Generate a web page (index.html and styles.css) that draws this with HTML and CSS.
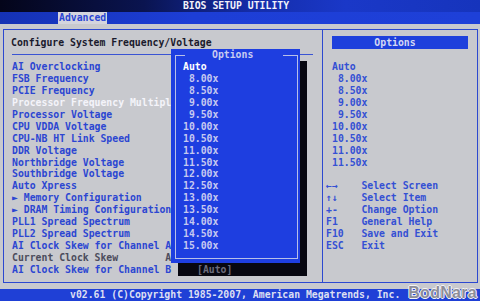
FILE: index.html
```html
<!DOCTYPE html>
<html>
<head>
<meta charset="utf-8">
<link rel="stylesheet" href="styles.css">
</head>
<body>
<div class="title">BIOS SETUP UTILITY</div>
<div class="tabs"><span class="tab">Advanced</span></div>
<div class="main">
  <div class="frame">
    <section class="left">
      <h1 class="heading">Configure System Frequency/Voltage</h1>
      <div class="sep"></div>
      <ul class="items">
        <li>AI Overclocking</li>
        <li>FSB Frequency</li>
        <li>PCIE Frequency</li>
        <li class="cur">Processor Frequency Multipl</li>
        <li>Processor Voltage</li>
        <li>CPU VDDA Voltage</li>
        <li>CPU-NB HT Link Speed</li>
        <li>DDR Voltage</li>
        <li>Northbridge Voltage</li>
        <li>Southbridge Voltage</li>
        <li>Auto Xpress</li>
        <li>► Memory Configuration</li>
        <li>► DRAM Timing Configuration</li>
        <li>PLL1 Spread Spectrum</li>
        <li>PLL2 Spread Spectrum</li>
        <li>AI Clock Skew for Channel A</li>
        <li class="dim">Current Clock Skew        A</li>
        <li>AI Clock Skew for Channel B</li>
      </ul>
    </section>
    <section class="right">
      <div class="opt-head">Options</div>
      <ul class="vals">
        <li>Auto</li>
        <li> 8.00x</li>
        <li> 8.50x</li>
        <li> 9.00x</li>
        <li> 9.50x</li>
        <li>10.00x</li>
        <li>10.50x</li>
        <li>11.00x</li>
        <li>11.50x</li>
      </ul>
      <ul class="help">
        <li><span class="k">←→</span>Select Screen</li>
        <li><span class="k">↑↓</span>Select Item</li>
        <li><span class="k">+-</span>Change Option</li>
        <li><span class="k">F1</span>General Help</li>
        <li><span class="k">F10</span>Save and Exit</li>
        <li><span class="k">ESC</span>Exit</li>
      </ul>
    </section>
  </div>
</div>
<div class="footer">v02.61 (C)Copyright 1985-2007, American Megatrends, Inc.</div>

<div class="shadow"><span>[Auto]</span></div>
<div class="popup">
  <fieldset class="pframe">
    <legend>Options</legend>
    <ul class="plist">
      <li class="sel">Auto</li>
      <li> 8.00x</li>
      <li> 8.50x</li>
      <li> 9.00x</li>
      <li> 9.50x</li>
      <li>10.00x</li>
      <li>10.50x</li>
      <li>11.00x</li>
      <li>11.50x</li>
      <li>12.00x</li>
      <li>12.50x</li>
      <li>13.00x</li>
      <li>13.50x</li>
      <li>14.00x</li>
      <li>14.50x</li>
      <li>15.00x</li>
    </ul>
  </fieldset>
</div>
<div class="watermark">BodNara</div>
</body>
</html>
```
FILE: styles.css
```css
html, body {
  margin: 0;
  padding: 0;
}
body {
  width: 480px;
  height: 301px;
  overflow: hidden;
  position: relative;
  background: #c8c9ce;
  font-family: "DejaVu Sans Mono", "Liberation Mono", monospace;
  font-weight: bold;
  font-size: 9.8px;
  line-height: 11.94px;
}
ul {
  list-style: none;
  margin: 0;
  padding: 0;
}
li {
  white-space: pre;
}

.title {
  height: 12px;
  line-height: 12px;
  text-align: center;
  padding-right: 8px;
  color: #f2f2fa;
  background: linear-gradient(90deg, #04051a 0%, #0a1450 30%, #142ca8 52%, #1a38c8 72%, #1634bc 100%);
}
.tabs {
  height: 12px;
  padding-left: 58px;
  background: linear-gradient(90deg, #1532b4 0%, #1d3ed6 40%, #1e40d8 100%);
}
.tab {
  display: inline-block;
  height: 12px;
  line-height: 12px;
  padding: 0 1px;
  background: #d4d5de;
  color: #2a46d4;
}

.main {
  height: 265px;
  box-sizing: border-box;
  padding: 5px 2px 0 3px;
}
.frame {
  height: 254px;
  box-sizing: border-box;
  border: 1px solid #2c48d0;
  display: grid;
  grid-template-columns: 319px 1fr;
}

.left {
  border-right: 1px solid #2c48d0;
  padding: 7px 0 0 7px;
}
.heading {
  margin: 0;
  font: inherit;
  line-height: 12px;
  color: #1a1a2c;
}
.sep {
  margin: 5px 0 0 1px;
  width: 301px;
  height: 1px;
  background: #3a54d4;
}
.items {
  margin: 6px 0 0 1px;
  color: #2c46d2;
}
.items .cur {
  color: #f4f4fa;
}
.items .dim {
  color: #4c4c5c;
}

.right {
  padding-top: 6px;
}
.opt-head {
  margin-left: 9px;
  width: 136px;
  height: 13px;
  line-height: 13px;
  box-sizing: border-box;
  padding-right: 10px;
  text-align: center;
  background: #1e40dc;
  color: #d4d8f4;
}
.vals {
  margin: 12px 0 0 9px;
  color: #3450d4;
}
.help {
  margin: 11.94px 0 0 3px;
  color: #3450d4;
}
.help .k {
  display: inline-block;
  width: 6ch;
}

.footer {
  height: 12px;
  line-height: 12px;
  padding-left: 70px;
  white-space: pre;
  background: #1f40d6;
  color: #dcdff2;
}

.shadow {
  position: absolute;
  left: 178px;
  top: 61px;
  width: 129px;
  height: 215px;
  background: #070710;
  display: flex;
  align-items: flex-end;
}
.shadow span {
  padding-left: 19px;
  color: #6c6c7c;
}

.popup {
  position: absolute;
  left: 171px;
  top: 49px;
  width: 129px;
  height: 214px;
  box-sizing: border-box;
  padding: 0 2px 4px 4px;
  background: #1e3ee0;
}
.pframe {
  margin: 0;
  height: 100%;
  box-sizing: border-box;
  border: 1px solid #b8bfe8;
  padding: 0 0 0 7px;
  min-inline-size: 0;
}
.pframe legend {
  margin-left: 2px;
  padding: 0 30px 0 27px;
  line-height: 12px;
  color: #c8ccf0;
}
.plist {
  color: #c6c9f0;
}
.plist .sel {
  color: #ffffff;
}

.watermark {
  position: absolute;
  right: 3px;
  bottom: 0;
  font-family: "Liberation Sans", Arial, sans-serif;
  font-weight: bold;
  font-size: 16px;
  line-height: 16px;
  letter-spacing: 0.3px;
  color: #8e8e98;
  text-shadow: 1px 0 0 #f4f4f8, -1px 0 0 #f4f4f8, 0 1px 0 #f4f4f8, 0 -1px 0 #f4f4f8;
}
```
